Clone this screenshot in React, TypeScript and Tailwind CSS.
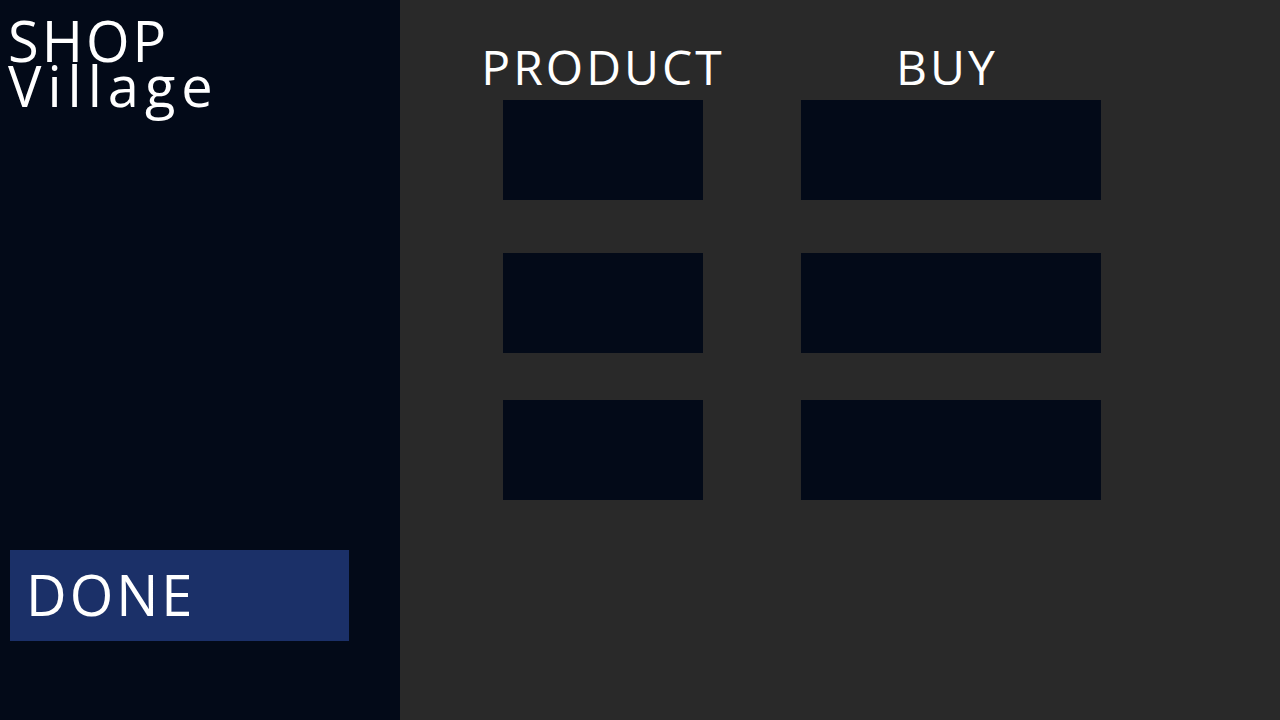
const rows = [
  { product: "Product 1", gap: "pb-[53px]" },
  { product: "Product 2", gap: "pb-[47px]" },
  { product: "Product 3", gap: "pb-0" },
];

function Sidebar() {
  return (
    <aside className="flex w-[400px] shrink-0 flex-col bg-[#030a18] pt-[18px] pb-[79px]">
      <header className="pl-[8px] text-[56px] leading-[45px]">
        <h1 className="tracking-[3px]">SHOP</h1>
        <p className="tracking-[6px]">Village</p>
      </header>
      <button
        type="button"
        className="mt-auto ml-[10px] w-[339px] bg-[#1b3068] px-[16px] pt-[6px] pb-[9px] text-left text-[56px] leading-[76px] tracking-[3px]"
      >
        DONE
      </button>
    </aside>
  );
}

function ProductTable() {
  return (
    <table className="border-collapse">
      <thead>
        <tr className="text-[48px] leading-[60px] tracking-[3px]">
          <th scope="col" className="w-[244px] p-0 pb-[3px] font-normal">
            PRODUCT
          </th>
          <th scope="col" className="w-[376px] p-0 pb-[3px] pl-[68px] font-normal">
            BUY
          </th>
        </tr>
      </thead>
      <tbody>
        {rows.map(({ product, gap }) => (
          <tr key={product}>
            <td className={`px-0 pt-0 ${gap}`}>
              <div className="mx-auto h-[100px] w-[200px] bg-[#030a18]" />
            </td>
            <td className={`pt-0 pr-0 pl-[76px] ${gap}`}>
              <button
                type="button"
                aria-label={`Buy ${product}`}
                className="block h-[100px] w-[300px] bg-[#030a18]"
              />
            </td>
          </tr>
        ))}
      </tbody>
    </table>
  );
}

export default function App() {
  return (
    <div className="flex min-h-screen bg-[#292929] font-['Open_Sans','Noto_Sans',sans-serif] text-white">
      <Sidebar />
      <main className="flex-1 pt-[37px] pl-[81px]">
        <ProductTable />
      </main>
    </div>
  );
}
